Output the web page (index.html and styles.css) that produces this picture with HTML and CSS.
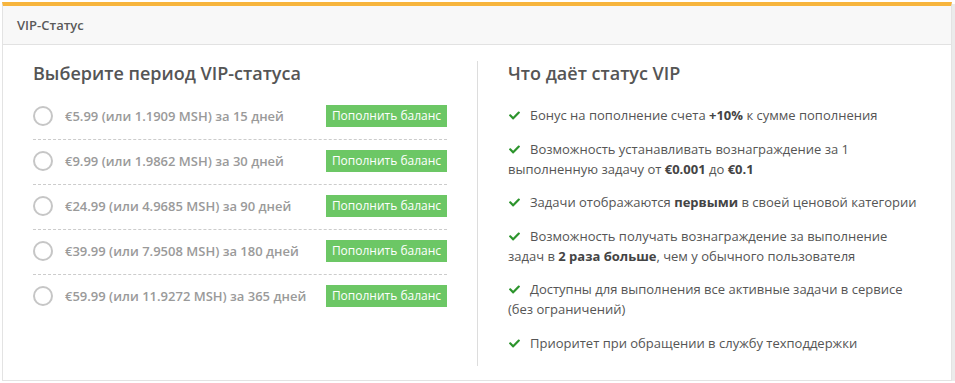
FILE: index.html
```html
<!DOCTYPE html>
<html lang="ru">
<head>
<meta charset="utf-8">
<link rel="stylesheet" href="styles.css">
</head>
<body>
<div class="panel">
  <div class="panel-head">VIP-Статус</div>
  <div class="panel-body">
    <div class="col col-left">
      <h2 class="title">Выберите период VIP-статуса</h2>
      <div class="period">
        <span class="radio"></span>
        <span class="period-text">€5.99 (или 1.1909 MSH) за 15 дней</span>
        <button class="btn">Пополнить баланс</button>
      </div>
      <div class="period">
        <span class="radio"></span>
        <span class="period-text">€9.99 (или 1.9862 MSH) за 30 дней</span>
        <button class="btn">Пополнить баланс</button>
      </div>
      <div class="period">
        <span class="radio"></span>
        <span class="period-text">€24.99 (или 4.9685 MSH) за 90 дней</span>
        <button class="btn">Пополнить баланс</button>
      </div>
      <div class="period">
        <span class="radio"></span>
        <span class="period-text">€39.99 (или 7.9508 MSH) за 180 дней</span>
        <button class="btn">Пополнить баланс</button>
      </div>
      <div class="period last">
        <span class="radio"></span>
        <span class="period-text">€59.99 (или 11.9272 MSH) за 365 дней</span>
        <button class="btn">Пополнить баланс</button>
      </div>
    </div>
    <div class="divider"></div>
    <div class="col col-right">
      <h2 class="title">Что даёт статус VIP</h2>
      <ul class="perks">
        <li><svg class="check" viewBox="0 0 512 512"><path d="M173.9 439.4L7.5 273c-10-10-10-26.2 0-36.2l36.2-36.2c10-10 26.2-10 36.2 0L192 312.7 432.1 72.6c10-10 26.2-10 36.2 0l36.2 36.2c10 10 10 26.2 0 36.2L210.1 439.4c-10 10-26.2 10-36.2 0z"/></svg>Бонус на пополнение счета <b>+10%</b> к сумме пополнения</li>
        <li><svg class="check" viewBox="0 0 512 512"><path d="M173.9 439.4L7.5 273c-10-10-10-26.2 0-36.2l36.2-36.2c10-10 26.2-10 36.2 0L192 312.7 432.1 72.6c10-10 26.2-10 36.2 0l36.2 36.2c10 10 10 26.2 0 36.2L210.1 439.4c-10 10-26.2 10-36.2 0z"/></svg>Возможность устанавливать вознаграждение за 1 выполненную задачу от <b>€0.001</b> до <b>€0.1</b></li>
        <li><svg class="check" viewBox="0 0 512 512"><path d="M173.9 439.4L7.5 273c-10-10-10-26.2 0-36.2l36.2-36.2c10-10 26.2-10 36.2 0L192 312.7 432.1 72.6c10-10 26.2-10 36.2 0l36.2 36.2c10 10 10 26.2 0 36.2L210.1 439.4c-10 10-26.2 10-36.2 0z"/></svg>Задачи отображаются <b>первыми</b> в своей ценовой категории</li>
        <li><svg class="check" viewBox="0 0 512 512"><path d="M173.9 439.4L7.5 273c-10-10-10-26.2 0-36.2l36.2-36.2c10-10 26.2-10 36.2 0L192 312.7 432.1 72.6c10-10 26.2-10 36.2 0l36.2 36.2c10 10 10 26.2 0 36.2L210.1 439.4c-10 10-26.2 10-36.2 0z"/></svg>Возможность получать вознаграждение за выполнение задач в <b>2 раза больше</b>, чем у обычного пользователя</li>
        <li><svg class="check" viewBox="0 0 512 512"><path d="M173.9 439.4L7.5 273c-10-10-10-26.2 0-36.2l36.2-36.2c10-10 26.2-10 36.2 0L192 312.7 432.1 72.6c10-10 26.2-10 36.2 0l36.2 36.2c10 10 10 26.2 0 36.2L210.1 439.4c-10 10-26.2 10-36.2 0z"/></svg>Доступны для выполнения все активные задачи в сервисе (без ограничений)</li>
        <li><svg class="check" viewBox="0 0 512 512"><path d="M173.9 439.4L7.5 273c-10-10-10-26.2 0-36.2l36.2-36.2c10-10 26.2-10 36.2 0L192 312.7 432.1 72.6c10-10 26.2-10 36.2 0l36.2 36.2c10 10 10 26.2 0 36.2L210.1 439.4c-10 10-26.2 10-36.2 0z"/></svg>Приоритет при обращении в службу техподдержки</li>
      </ul>
    </div>
  </div>
</div>
</body>
</html>
```

FILE: styles.css
```css
html, body {
  margin: 0;
  padding: 0;
  background: #ffffff;
}
body {
  padding: 2px 0 0 2px;
  font-family: "Open Sans", "Liberation Sans", sans-serif;
  color: #555555;
}
.panel {
  width: 948px;
  border: 1px solid #e3e3e3;
  border-top: 4px solid #f7b53d;
  box-shadow: 3px 2px 0 #ebebeb;
  background: #ffffff;
}
.panel-head {
  background: #f8f8f8;
  border-bottom: 1px solid #e2e2e2;
  height: 38px;
  padding: 0 14px;
  font-size: 13px;
  font-weight: 600;
  line-height: 38px;
  color: #5a5a5a;
}
.panel-body {
  display: flex;
  padding: 16px 30px 14px 30px;
  height: 305px;
}
.col {
  flex: 0 0 auto;
}
.col-left {
  width: 414px;
}
.col-right {
  width: 413px;
}
.divider {
  width: 1px;
  background: #dddddd;
  margin: 0 30px;
}
.title {
  margin: 0;
  font-size: 18px;
  font-weight: 600;
  line-height: 24px;
  color: #555555;
}
.col-left .title {
  margin-bottom: 10px;
}
.period {
  display: flex;
  align-items: center;
  padding: 10px 0 12px;
  border-bottom: 1px dashed #cccccc;
}
.period.last {
  border-bottom: none;
}
.radio {
  width: 16px;
  height: 16px;
  border: 2px solid #c6c6c6;
  border-radius: 50%;
  flex: 0 0 auto;
}
.period-text {
  flex: 1 1 auto;
  margin-left: 12px;
  font-size: 13px;
  font-weight: 600;
  color: #9a9a9a;
}
.btn {
  flex: 0 0 auto;
  width: 121px;
  height: 22px;
  padding: 0;
  border: none;
  background: #6cc765;
  color: #ffffff;
  font-family: "Open Sans", "Liberation Sans", sans-serif;
  font-size: 12px;
  line-height: 22px;
}
.perks {
  list-style: none;
  margin: 20px 0 0 0;
  padding: 0;
}
.perks li {
  font-size: 13px;
  line-height: 20px;
  color: #555555;
  margin-bottom: 13.5px;
}
.perks b {
  font-weight: 700;
  color: #444444;
}
.check {
  width: 11px;
  height: 11px;
  fill: #2c942c;
  margin: 0 10px 0 1px;
  vertical-align: -1px;
}
```
